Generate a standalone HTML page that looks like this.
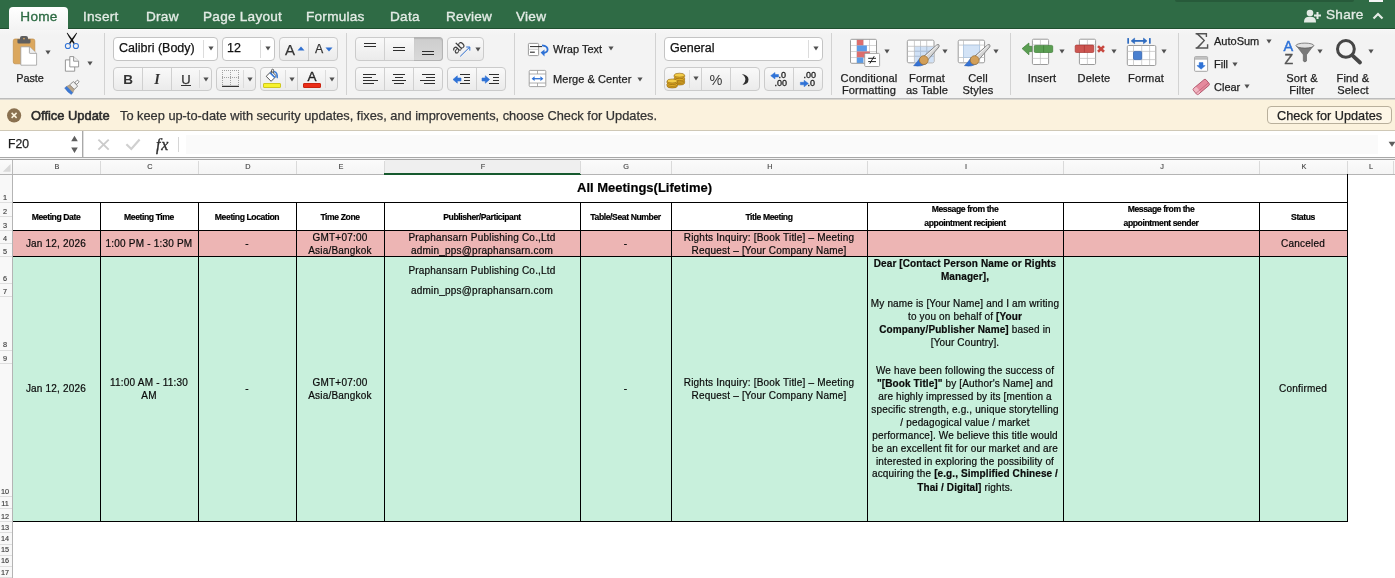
<!DOCTYPE html>
<html><head><meta charset="utf-8"><style>
html,body{margin:0;padding:0;}
body{width:1395px;height:578px;overflow:hidden;position:relative;background:#fff;font-family:'Liberation Sans', sans-serif;}
.t{position:absolute;white-space:pre;will-change:transform;}
b{font-weight:700;letter-spacing:0.1px;}
svg{overflow:visible;}
</style></head><body>
<div style="position:absolute;left:0px;top:0px;width:1395px;height:29px;background:#2f6b45;"></div>
<div style="position:absolute;left:0px;top:28px;width:1395px;height:1px;background:#1f4f2f;"></div>
<div style="position:absolute;left:0px;top:29px;width:1395px;height:1px;background:#fafafa;"></div>
<div style="position:absolute;left:1175px;top:0px;width:179px;height:2px;background:#275a3a;border-radius:0 0 5px 5px;"></div>
<div style="position:absolute;left:1369px;top:0px;width:14px;height:1.5px;background:#f4f4f4;"></div>
<div style="position:absolute;left:9px;top:7px;width:59px;height:23px;background:linear-gradient(#ffffff,#f3f3f3);border-radius:4px 4px 0 0;"></div>
<div class="t" style="left:-1.5px;width:80px;text-align:center;top:8.83px;font-size:13.6px;line-height:16.32px;font-weight:400;color:#2d6b43;letter-spacing:0.25px;-webkit-text-stroke:0.35px #2d6b43;">Home</div>
<div class="t" style="left:83.1px;top:8.83px;font-size:13.6px;line-height:16.32px;font-weight:400;color:#e3ebe5;letter-spacing:0.25px;-webkit-text-stroke:0.35px #e3ebe5;">Insert</div>
<div class="t" style="left:145.5px;top:8.83px;font-size:13.6px;line-height:16.32px;font-weight:400;color:#e3ebe5;letter-spacing:0.25px;-webkit-text-stroke:0.35px #e3ebe5;">Draw</div>
<div class="t" style="left:203.20000000000002px;top:8.83px;font-size:13.6px;line-height:16.32px;font-weight:400;color:#e3ebe5;letter-spacing:0.25px;-webkit-text-stroke:0.35px #e3ebe5;">Page Layout</div>
<div class="t" style="left:306.3px;top:8.83px;font-size:13.6px;line-height:16.32px;font-weight:400;color:#e3ebe5;letter-spacing:0.25px;-webkit-text-stroke:0.35px #e3ebe5;">Formulas</div>
<div class="t" style="left:390.40000000000003px;top:8.83px;font-size:13.6px;line-height:16.32px;font-weight:400;color:#e3ebe5;letter-spacing:0.25px;-webkit-text-stroke:0.35px #e3ebe5;">Data</div>
<div class="t" style="left:445.6px;top:8.83px;font-size:13.6px;line-height:16.32px;font-weight:400;color:#e3ebe5;letter-spacing:0.25px;-webkit-text-stroke:0.35px #e3ebe5;">Review</div>
<div class="t" style="left:516.1999999999999px;top:8.83px;font-size:13.6px;line-height:16.32px;font-weight:400;color:#e3ebe5;letter-spacing:0.25px;-webkit-text-stroke:0.35px #e3ebe5;">View</div>
<svg style="position:absolute;left:1304px;top:9px" width="19" height="14" viewBox="0 0 19 14"><circle cx="6" cy="4" r="3.3" fill="#e3ebe5"/><path d="M0 13.5 C0 8.5 2.5 7.8 6 7.8 C9.5 7.8 12 8.5 12 13.5 Z" fill="#e3ebe5"/><path d="M13.5 3 V10 M10 6.5 H17" stroke="#e3ebe5" stroke-width="2"/></svg>
<div class="t" style="left:1326.3px;top:6.83px;font-size:13.6px;line-height:16.32px;font-weight:400;color:#e3ebe5;letter-spacing:0.25px;-webkit-text-stroke:0.35px #e3ebe5;">Share</div>
<svg style="position:absolute;left:1372px;top:12px" width="12" height="8" viewBox="0 0 12 8"><path d="M1.5 6.5 L6 2 L10.5 6.5" stroke="#e3ebe5" stroke-width="2.2" fill="none"/></svg>
<div style="position:absolute;left:0px;top:30px;width:1395px;height:68px;background:linear-gradient(#f6f6f6 0px,#f3f3f3 6px,#f3f3f3);"></div>
<div style="position:absolute;left:0px;top:98px;width:1395px;height:1px;background:#bcbcbc;"></div>
<div style="position:absolute;left:0px;top:99px;width:1395px;height:1px;background:#d9d6cf;"></div>
<div style="position:absolute;left:104px;top:33px;width:1px;height:62px;background:#d2d2d2;"></div>
<div style="position:absolute;left:346px;top:33px;width:1px;height:62px;background:#d2d2d2;"></div>
<div style="position:absolute;left:514px;top:33px;width:1px;height:62px;background:#d2d2d2;"></div>
<div style="position:absolute;left:655px;top:33px;width:1px;height:62px;background:#d2d2d2;"></div>
<div style="position:absolute;left:831px;top:33px;width:1px;height:62px;background:#d2d2d2;"></div>
<div style="position:absolute;left:1010px;top:33px;width:1px;height:62px;background:#d2d2d2;"></div>
<div style="position:absolute;left:1178px;top:33px;width:1px;height:62px;background:#d2d2d2;"></div>
<svg style="position:absolute;left:10px;top:32px" width="32" height="36" viewBox="0 0 32 36">
<rect x="3.3" y="7" width="21.5" height="24.8" rx="1.8" fill="#dba75d" stroke="#c08e47" stroke-width="0.7"/>
<path d="M7.4 7.2 H20.5 V10 Q20.5 11.6 19 11.6 H8.9 Q7.4 11.6 7.4 10 Z" fill="#5f5f5f"/>
<path d="M10 8 V6 Q10 4 12 4 H16 Q18 4 18 6 V8 Z" fill="#5f5f5f"/>
<circle cx="14" cy="6.6" r="0.9" fill="#dba75d"/>
<path d="M10.8 14.8 H19.4 L26.6 21.4 V33 Q26.6 33.2 26.4 33.2 H11 Q10.8 33.2 10.8 33 Z" fill="#fff" stroke="#9d9d9d" stroke-width="0.8"/>
<path d="M19.4 14.8 V20.8 Q19.4 21.4 20 21.4 H26.6" fill="#eeeeee" stroke="#9d9d9d" stroke-width="0.8"/>
</svg>
<svg style="position:absolute;left:45px;top:49.5px" width="6" height="5" viewBox="0 0 6 5"><path d="M0.4 0.6 H5.6 L3 4.4 Z" fill="#505050"/></svg>
<div class="t" style="left:-0.3999999999999986px;width:60px;text-align:center;top:71.98px;font-size:10.8px;line-height:12.96px;font-weight:400;color:#1e1e1e;letter-spacing:0px;-webkit-text-stroke:0.25px currentColor;">Paste</div>
<svg style="position:absolute;left:60px;top:30px" width="24" height="22" viewBox="0 0 24 22">
<path d="M6.7 3.1 Q7.1 2.6 7.6 3 L12.9 9.9 L14.8 13.3 L13.6 13.9 L11.6 10.9 Q8.6 7.2 6.7 3.1Z" fill="#111"/>
<path d="M17.1 3.1 Q16.7 2.6 16.2 3 L10.9 9.9 L9 13.3 L10.2 13.9 L12.2 10.9 Q15.2 7.2 17.1 3.1Z" fill="#111"/>
<circle cx="7.9" cy="16" r="2.55" fill="none" stroke="#2f72d6" stroke-width="1.05"/>
<circle cx="15.9" cy="16" r="2.55" fill="none" stroke="#2f72d6" stroke-width="1.05"/>
</svg>
<svg style="position:absolute;left:60px;top:54px" width="24" height="20" viewBox="0 0 24 20">
<path d="M5.4 5.9 H10.8 L14.7 9.4 V17.2 H5.4 Z" fill="#fff" stroke="#8c8c8c" stroke-width="0.9"/>
<path d="M9.8 2.6 H13.6 L18.6 7.2 V12.9 H9.8 Z" fill="#fff" stroke="#8c8c8c" stroke-width="0.9"/>
<path d="M13.6 2.6 V7.2 H18.6" fill="#f0f0f0" stroke="#8c8c8c" stroke-width="0.9"/>
</svg>
<svg style="position:absolute;left:86.6px;top:61.4px" width="6" height="5" viewBox="0 0 6 5"><path d="M0.4 0.6 H5.6 L3 4.4 Z" fill="#505050"/></svg>
<svg style="position:absolute;left:60px;top:76px" width="24" height="24" viewBox="0 0 24 24">
<g transform="translate(13.2 10) rotate(45)">
<rect x="-1.3" y="-7.4" width="2.6" height="4.4" rx="1.2" fill="#fafafa" stroke="#5e5e5e" stroke-width="0.7"/>
<rect x="-3.2" y="-3.2" width="6.4" height="5" rx="0.6" fill="#f0f0f0" stroke="#5e5e5e" stroke-width="0.7"/>
<path d="M-3.2 1.8 H3.2 L4.4 5 H-4.4 Z" fill="#b9a68c" stroke="#85735c" stroke-width="0.4"/>
<path d="M-4.4 5 H4.4 L4.7 7.4 Q0 8.4 -4.7 7.4 Z" fill="#3b78d4" stroke="#2c62b8" stroke-width="0.4"/>
</g></svg>
<div style="position:absolute;left:113px;top:37px;width:105px;height:24px;background:#fff;border:1px solid #c4c4c4;border-radius:4px;box-sizing:border-box;"></div>
<div style="position:absolute;left:203px;top:40px;width:1px;height:18px;background:#dcdcdc;"></div>
<svg style="position:absolute;left:207.5px;top:46.0px" width="6" height="5" viewBox="0 0 6 5"><path d="M0.4 0.6 H5.6 L3 4.4 Z" fill="#505050"/></svg>
<div class="t" style="left:118.5px;top:41.07px;font-size:12.5px;line-height:15.0px;font-weight:400;color:#111;letter-spacing:0px;-webkit-text-stroke:0.25px currentColor;">Calibri (Body)</div>
<div style="position:absolute;left:222px;top:37px;width:53px;height:24px;background:#fff;border:1px solid #c4c4c4;border-radius:4px;box-sizing:border-box;"></div>
<div style="position:absolute;left:260px;top:40px;width:1px;height:18px;background:#dcdcdc;"></div>
<svg style="position:absolute;left:264.5px;top:46.0px" width="6" height="5" viewBox="0 0 6 5"><path d="M0.4 0.6 H5.6 L3 4.4 Z" fill="#505050"/></svg>
<div class="t" style="left:227px;top:41.07px;font-size:12.5px;line-height:15.0px;font-weight:400;color:#111;letter-spacing:0px;-webkit-text-stroke:0.25px currentColor;">12</div>
<div style="position:absolute;left:279px;top:37px;width:59px;height:24px;background:linear-gradient(#f9f9f9,#ebebeb);border:1px solid #cbcbcb;border-radius:4px;box-sizing:border-box;"></div>
<div style="position:absolute;left:308px;top:38px;width:1px;height:22px;background:#d0d0d0;"></div>
<div class="t" style="left:280.0px;width:20px;text-align:center;top:40.50px;font-size:15px;line-height:18.0px;font-weight:400;color:#333;letter-spacing:0px;-webkit-text-stroke:0.25px currentColor;">A</div>
<svg style="position:absolute;left:296.5px;top:45.5px" width="8" height="5" viewBox="0 0 8 5"><path d="M0.5 4.5 L4 0.5 L7.5 4.5Z" fill="#2f6fd0"/></svg>
<div class="t" style="left:309.3px;width:20px;text-align:center;top:42.06px;font-size:12.3px;line-height:14.76px;font-weight:400;color:#333;letter-spacing:0px;-webkit-text-stroke:0.25px currentColor;">A</div>
<svg style="position:absolute;left:324.5px;top:46.5px" width="8" height="5" viewBox="0 0 8 5"><path d="M0.5 0.5 L7.5 0.5 L4 4.5Z" fill="#2f6fd0"/></svg>
<div style="position:absolute;left:113px;top:67px;width:99px;height:24px;background:linear-gradient(#f9f9f9,#ebebeb);border:1px solid #cbcbcb;border-radius:4px;box-sizing:border-box;"></div>
<div style="position:absolute;left:142px;top:68px;width:1px;height:22px;background:#d0d0d0;"></div>
<div style="position:absolute;left:171px;top:68px;width:1px;height:22px;background:#d0d0d0;"></div>
<div style="position:absolute;left:199px;top:70px;width:1px;height:18px;background:#dcdcdc;"></div>
<div class="t" style="left:118.19999999999999px;width:20px;text-align:center;top:71.92px;font-size:13.5px;line-height:16.2px;font-weight:700;color:#333;letter-spacing:0px;">B</div>
<div class="t" style="left:147.2px;width:20px;text-align:center;top:70.98px;font-size:14.5px;line-height:17.4px;font-weight:700;color:#333;letter-spacing:0px;font-style:italic;font-family:Liberation Serif;">I</div>
<div class="t" style="left:175.8px;width:20px;text-align:center;top:72.40px;font-size:13px;line-height:15.6px;font-weight:400;color:#333;letter-spacing:0px;-webkit-text-stroke:0.25px currentColor;">U</div>
<div style="position:absolute;left:181px;top:85px;width:10px;height:1.2px;background:#333;"></div>
<svg style="position:absolute;left:202.5px;top:76.5px" width="6" height="5" viewBox="0 0 6 5"><path d="M0.4 0.6 H5.6 L3 4.4 Z" fill="#505050"/></svg>
<div style="position:absolute;left:216px;top:67px;width:40px;height:24px;background:linear-gradient(#f9f9f9,#ebebeb);border:1px solid #cbcbcb;border-radius:4px;box-sizing:border-box;"></div>
<div style="position:absolute;left:243px;top:70px;width:1px;height:18px;background:#dcdcdc;"></div>
<svg style="position:absolute;left:221px;top:69px" width="20" height="19" viewBox="0 0 20 19"><path d="M3 1 h0.9 v0.9 h-0.9z M5 1 h0.9 v0.9 h-0.9z M17 3 h0.9 v0.9 h-0.9z M17 9 h0.9 v0.9 h-0.9z M9 5 h0.9 v0.9 h-0.9z M9 8 h0.9 v0.9 h-0.9z M17 15 h0.9 v0.9 h-0.9z M9 11 h0.9 v0.9 h-0.9z M11 8 h0.9 v0.9 h-0.9z M1 3 h0.9 v0.9 h-0.9z M1 9 h0.9 v0.9 h-0.9z M13 8 h0.9 v0.9 h-0.9z M7 1 h0.9 v0.9 h-0.9z M15 8 h0.9 v0.9 h-0.9z M1 15 h0.9 v0.9 h-0.9z M17 5 h0.9 v0.9 h-0.9z M17 11 h0.9 v0.9 h-0.9z M9 1 h0.9 v0.9 h-0.9z M17 8 h0.9 v0.9 h-0.9z M9 7 h0.9 v0.9 h-0.9z M11 1 h0.9 v0.9 h-0.9z M9 13 h0.9 v0.9 h-0.9z M13 1 h0.9 v0.9 h-0.9z M1 5 h0.9 v0.9 h-0.9z M1 11 h0.9 v0.9 h-0.9z M1 8 h0.9 v0.9 h-0.9z M15 1 h0.9 v0.9 h-0.9z M3 8 h0.9 v0.9 h-0.9z M17 1 h0.9 v0.9 h-0.9z M17 7 h0.9 v0.9 h-0.9z M9 3 h0.9 v0.9 h-0.9z M5 8 h0.9 v0.9 h-0.9z M9 9 h0.9 v0.9 h-0.9z M1 1 h0.9 v0.9 h-0.9z M17 13 h0.9 v0.9 h-0.9z M9 15 h0.9 v0.9 h-0.9z M1 7 h0.9 v0.9 h-0.9z M1 13 h0.9 v0.9 h-0.9z M7 8 h0.9 v0.9 h-0.9z" fill="#9a9a9a"/><rect x="1" y="16.8" width="17" height="1.1" fill="#1e1e1e"/></svg>
<svg style="position:absolute;left:246.5px;top:76.5px" width="6" height="5" viewBox="0 0 6 5"><path d="M0.4 0.6 H5.6 L3 4.4 Z" fill="#505050"/></svg>
<div style="position:absolute;left:260px;top:67px;width:78px;height:24px;background:linear-gradient(#f9f9f9,#ebebeb);border:1px solid #cbcbcb;border-radius:4px;box-sizing:border-box;"></div>
<div style="position:absolute;left:285px;top:70px;width:1px;height:18px;background:#dcdcdc;"></div>
<div style="position:absolute;left:297px;top:68px;width:1px;height:22px;background:#d0d0d0;"></div>
<div style="position:absolute;left:325px;top:70px;width:1px;height:18px;background:#dcdcdc;"></div>
<svg style="position:absolute;left:264px;top:68px" width="16" height="15" viewBox="0 0 16 15">
<path d="M2.2 8.3 L7.5 3.1 L12.4 8 L7.1 13.3 Z" fill="#fff" stroke="#3e3e3e" stroke-width="0.9" stroke-linejoin="round"/>
<path d="M6 4.6 L11 9.6" stroke="#3a7bd5" stroke-width="1.6"/>
<path d="M7.6 5.4 V2.2 Q7.6 1.2 8.6 1.2 Q9.6 1.2 9.6 2.2 V5" stroke="#3e3e3e" stroke-width="0.8" fill="none"/>
<path d="M10.4 3.6 Q13.6 4.6 13.2 9.6" stroke="#3a7bd5" stroke-width="1.5" fill="none" stroke-linecap="round"/></svg>
<div style="position:absolute;left:263px;top:83px;width:18px;height:5px;background:#f7f22e;border:0.6px solid #cfc820;box-sizing:border-box;border-radius:1px;"></div>
<svg style="position:absolute;left:288.5px;top:76.5px" width="6" height="5" viewBox="0 0 6 5"><path d="M0.4 0.6 H5.6 L3 4.4 Z" fill="#505050"/></svg>
<div class="t" style="left:302.0px;width:20px;text-align:center;top:68.62px;font-size:13.5px;line-height:16.2px;font-weight:400;color:#222;letter-spacing:0px;-webkit-text-stroke:0.35px #222;">A</div>
<div style="position:absolute;left:303px;top:83px;width:18px;height:5px;background:#ea2d17;border:0.6px solid #c92410;box-sizing:border-box;border-radius:1px;"></div>
<svg style="position:absolute;left:328.5px;top:76.5px" width="6" height="5" viewBox="0 0 6 5"><path d="M0.4 0.6 H5.6 L3 4.4 Z" fill="#505050"/></svg>
<div style="position:absolute;left:355px;top:37px;width:88px;height:24px;background:linear-gradient(#f9f9f9,#ebebeb);border:1px solid #cbcbcb;border-radius:4px;box-sizing:border-box;"></div>
<div style="position:absolute;left:414px;top:37px;width:29px;height:24px;background:linear-gradient(#cdcdcd,#d9d9d9);border:1px solid #b4b4b4;border-left:none;border-radius:0 4px 4px 0;box-sizing:border-box;box-shadow:inset 0 1px 1px rgba(0,0,0,0.12);"></div>
<div style="position:absolute;left:384px;top:38px;width:1px;height:22px;background:#d0d0d0;"></div>
<div style="position:absolute;left:364px;top:43px;width:12px;height:1px;background:#2e2e2e;"></div>
<div style="position:absolute;left:364px;top:46px;width:12px;height:1px;background:#2e2e2e;"></div>
<div style="position:absolute;left:393px;top:47px;width:12px;height:1px;background:#2e2e2e;"></div>
<div style="position:absolute;left:393px;top:50px;width:12px;height:1px;background:#2e2e2e;"></div>
<div style="position:absolute;left:422px;top:51px;width:12px;height:1px;background:#2e2e2e;"></div>
<div style="position:absolute;left:422px;top:54px;width:12px;height:1px;background:#2e2e2e;"></div>
<div style="position:absolute;left:355px;top:67px;width:88px;height:24px;background:linear-gradient(#f9f9f9,#ebebeb);border:1px solid #cbcbcb;border-radius:4px;box-sizing:border-box;"></div>
<div style="position:absolute;left:384px;top:68px;width:1px;height:22px;background:#d0d0d0;"></div>
<div style="position:absolute;left:413px;top:68px;width:1px;height:22px;background:#d0d0d0;"></div>
<div style="position:absolute;left:363px;top:74px;width:13px;height:1px;background:#2e2e2e;"></div>
<div style="position:absolute;left:363px;top:77px;width:9px;height:1px;background:#2e2e2e;"></div>
<div style="position:absolute;left:363px;top:80px;width:15px;height:1px;background:#2e2e2e;"></div>
<div style="position:absolute;left:363px;top:83px;width:11px;height:1px;background:#2e2e2e;"></div>
<div style="position:absolute;left:393px;top:74px;width:12px;height:1px;background:#2e2e2e;"></div>
<div style="position:absolute;left:395px;top:77px;width:8px;height:1px;background:#2e2e2e;"></div>
<div style="position:absolute;left:392px;top:80px;width:14px;height:1px;background:#2e2e2e;"></div>
<div style="position:absolute;left:394px;top:83px;width:10px;height:1px;background:#2e2e2e;"></div>
<div style="position:absolute;left:422px;top:74px;width:13px;height:1px;background:#2e2e2e;"></div>
<div style="position:absolute;left:426px;top:77px;width:9px;height:1px;background:#2e2e2e;"></div>
<div style="position:absolute;left:420px;top:80px;width:15px;height:1px;background:#2e2e2e;"></div>
<div style="position:absolute;left:424px;top:83px;width:11px;height:1px;background:#2e2e2e;"></div>
<div style="position:absolute;left:447px;top:37px;width:37px;height:24px;background:linear-gradient(#f9f9f9,#ebebeb);border:1px solid #cbcbcb;border-radius:4px;box-sizing:border-box;"></div>
<svg style="position:absolute;left:450px;top:39px" width="24" height="20" viewBox="0 0 24 20"><text transform="translate(6.2 15.6) rotate(-45)" font-family="Liberation Sans" font-size="12" fill="#333" stroke="#333" stroke-width="0.15">ab</text>
<path d="M10.2 17.4 L19.4 8.4" stroke="#2f6fd0" stroke-width="1"/><path d="M16.2 8 H19.8 V11.6" stroke="#2f6fd0" stroke-width="1" fill="none"/></svg>
<svg style="position:absolute;left:474.5px;top:46.5px" width="6" height="5" viewBox="0 0 6 5"><path d="M0.4 0.6 H5.6 L3 4.4 Z" fill="#505050"/></svg>
<div style="position:absolute;left:447px;top:67px;width:59px;height:24px;background:linear-gradient(#f9f9f9,#ebebeb);border:1px solid #cbcbcb;border-radius:4px;box-sizing:border-box;"></div>
<div style="position:absolute;left:476px;top:68px;width:1px;height:22px;background:#d0d0d0;"></div>
<svg style="position:absolute;left:452px;top:72px" width="20" height="14" viewBox="0 0 20 14"><path d="M1 7.5 L5.3 3.8 V6 H9 V9 H5.3 V11.2Z" fill="#2f72d6" stroke="#2f72d6" stroke-width="0.6" stroke-linejoin="round"/>
<g fill="#2e2e2e"><rect x="8" y="2" width="10" height="1"/><rect x="12" y="5" width="6" height="1"/><rect x="12" y="8" width="6" height="1"/><rect x="8" y="11" width="10" height="1"/></g></svg>
<svg style="position:absolute;left:481px;top:72px" width="20" height="14" viewBox="0 0 20 14"><path d="M8.6 7.5 L4.3 3.8 V6 H1 V9 H4.3 V11.2Z" fill="#2f72d6" stroke="#2f72d6" stroke-width="0.6" stroke-linejoin="round"/>
<g fill="#2e2e2e"><rect x="8" y="2" width="10" height="1"/><rect x="12" y="5" width="6" height="1"/><rect x="12" y="8" width="6" height="1"/><rect x="8" y="11" width="10" height="1"/></g></svg>
<svg style="position:absolute;left:524px;top:38px" width="28" height="52" viewBox="0 0 28 52">
<rect x="4.4" y="5.4" width="10.2" height="12.2" rx="1" fill="#fff" stroke="#8f8f8f" stroke-width="0.9"/>
<path d="M4.4 11.3 H14.6" stroke="#b8b8b8" stroke-width="0.7"/>
<path d="M6 8.6 H18" stroke="#2a2a2a" stroke-width="1"/><path d="M6 14.2 H10.8" stroke="#2a2a2a" stroke-width="1.1"/>
<path d="M18 7.4 Q23.8 8 23.6 11.8 Q23.4 14.6 19.6 15" stroke="#2f72d6" stroke-width="1.8" fill="none"/>
<path d="M16.6 14.6 L20.5 11.4 L20.5 18.4 Z" fill="#2f72d6"/>
<rect x="5.2" y="32.4" width="16.6" height="16.2" rx="1" fill="#fff" stroke="#9a9a9a" stroke-width="0.9"/>
<path d="M5.2 36 H21.8 M5.2 45 H21.8 M13.5 32.4 V36 M13.5 45 V48.6" stroke="#9a9a9a" stroke-width="0.8"/>
<path d="M9.4 40.7 H16.6" stroke="#2f72d6" stroke-width="1.3"/>
<path d="M7.6 40.7 L10.6 38.3 V43.1Z M19.4 40.7 L16.4 38.3 V43.1Z" fill="#2f72d6"/>
</svg>
<div class="t" style="left:552.5px;top:43.29px;font-size:11px;line-height:13.2px;font-weight:400;color:#1e1e1e;letter-spacing:0px;-webkit-text-stroke:0.25px currentColor;">Wrap Text</div>
<svg style="position:absolute;left:608px;top:46.0px" width="6" height="5" viewBox="0 0 6 5"><path d="M0.4 0.6 H5.6 L3 4.4 Z" fill="#505050"/></svg>
<div class="t" style="left:552.5px;top:73.29px;font-size:11px;line-height:13.2px;font-weight:400;color:#1e1e1e;letter-spacing:0.05px;-webkit-text-stroke:0.25px currentColor;">Merge &amp; Center</div>
<svg style="position:absolute;left:637px;top:76.5px" width="6" height="5" viewBox="0 0 6 5"><path d="M0.4 0.6 H5.6 L3 4.4 Z" fill="#505050"/></svg>
<div style="position:absolute;left:664px;top:37px;width:159px;height:24px;background:#fff;border:1px solid #c4c4c4;border-radius:4px;box-sizing:border-box;"></div>
<div style="position:absolute;left:808px;top:40px;width:1px;height:18px;background:#dcdcdc;"></div>
<svg style="position:absolute;left:812.5px;top:46.0px" width="6" height="5" viewBox="0 0 6 5"><path d="M0.4 0.6 H5.6 L3 4.4 Z" fill="#505050"/></svg>
<div class="t" style="left:669.5px;top:40.87px;font-size:12.5px;line-height:15.0px;font-weight:400;color:#111;letter-spacing:0px;-webkit-text-stroke:0.25px currentColor;">General</div>
<div style="position:absolute;left:664px;top:67px;width:96px;height:24px;background:linear-gradient(#f9f9f9,#ebebeb);border:1px solid #cbcbcb;border-radius:4px;box-sizing:border-box;"></div>
<div style="position:absolute;left:689px;top:70px;width:1px;height:18px;background:#dcdcdc;"></div>
<div style="position:absolute;left:701px;top:68px;width:1px;height:22px;background:#d0d0d0;"></div>
<div style="position:absolute;left:730px;top:68px;width:1px;height:22px;background:#d0d0d0;"></div>
<svg style="position:absolute;left:665px;top:70px" width="22" height="18" viewBox="0 0 22 18"><g stroke="#8a6210" stroke-width="0.6">
<path d="M9.2 11.5 v1.6 a5.2 2 0 0 0 10.4 0 v-1.6" fill="#d9a21e"/><ellipse cx="14.4" cy="11.5" rx="5.2" ry="2" fill="#e9b52a"/>
<path d="M9.2 8.6 v1.6 a5.2 2 0 0 0 10.4 0 v-1.6" fill="#d9a21e"/><ellipse cx="14.4" cy="8.6" rx="5.2" ry="2" fill="#e9b52a"/>
<path d="M9.2 5.2 v1.6 a5.2 2 0 0 0 10.4 0 v-1.6" fill="#d9a21e"/><ellipse cx="14.4" cy="5.2" rx="5.2" ry="2" fill="#f3cc48"/>
<path d="M2 14.4 v1.6 a5.2 2 0 0 0 10.4 0 v-1.6" fill="#d9a21e"/><ellipse cx="7.2" cy="14.4" rx="5.2" ry="2" fill="#e9b52a"/>
<path d="M2 11 v1.6 a5.2 2 0 0 0 10.4 0 v-1.6" fill="#d9a21e"/><ellipse cx="7.2" cy="11" rx="5.2" ry="2" fill="#f3cc48"/>
</g></svg>
<svg style="position:absolute;left:692.5px;top:76.2px" width="6" height="5" viewBox="0 0 6 5"><path d="M0.4 0.6 H5.6 L3 4.4 Z" fill="#505050"/></svg>
<div class="t" style="left:701.0px;width:30px;text-align:center;top:71.98px;font-size:14.5px;line-height:17.4px;font-weight:400;color:#3a3a3a;letter-spacing:0px;">%</div>
<svg style="position:absolute;left:739px;top:72px" width="12" height="14" viewBox="0 0 12 14"><path d="M2.8 2 Q9.5 3 9.5 7.5 Q9.5 12 3.5 13 Q6.4 10.5 6.4 7.5 Q6.4 4.4 2.8 2Z" fill="#2e2e2e"/></svg>
<div style="position:absolute;left:764px;top:67px;width:59px;height:24px;background:linear-gradient(#f9f9f9,#ebebeb);border:1px solid #cbcbcb;border-radius:4px;box-sizing:border-box;"></div>
<div style="position:absolute;left:793px;top:68px;width:1px;height:22px;background:#d0d0d0;"></div>
<svg style="position:absolute;left:768px;top:70px" width="24" height="18" viewBox="0 0 24 18"><path d="M2.7 5.7 L7 2.5 V4.5 H10.5 V7 H7 V9Z" fill="#2f72d6" stroke="#2f72d6" stroke-width="0.5" stroke-linejoin="round"/>
<text x="10.5" y="8" font-family="Liberation Sans" font-size="9" fill="#222" stroke="#222" stroke-width="0.3">.0</text>
<text x="6.6" y="15.8" font-family="Liberation Sans" font-size="9" fill="#222" stroke="#222" stroke-width="0.3">.00</text></svg>
<svg style="position:absolute;left:797px;top:70px" width="24" height="18" viewBox="0 0 24 18"><text x="6.6" y="8" font-family="Liberation Sans" font-size="9" fill="#222" stroke="#222" stroke-width="0.3">.00</text>
<path d="M11.4 13.5 L7.1 10.3 V12.3 H3.4 V14.8 H7.1 V16.8Z" fill="#2f72d6" stroke="#2f72d6" stroke-width="0.5" stroke-linejoin="round"/>
<text x="10.5" y="15.8" font-family="Liberation Sans" font-size="9" fill="#222" stroke="#222" stroke-width="0.3">.0</text></svg>
<svg style="position:absolute;left:846px;top:36px" width="36" height="34" viewBox="0 0 36 34">
<rect x="4.5" y="3.3" width="26" height="24" rx="1.2" fill="#fff"/>
<path d="M4.5 9.5 H30.5 M4.5 15.5 H30.5 M4.5 21.5 H30.5 M10.9 3.3 V27.3 M17.1 3.3 V27.3 M23.5 3.3 V27.3" stroke="#c4c4c4" stroke-width="0.7"/>
<rect x="10.9" y="3.7" width="6.4" height="5.8" fill="#dc6e6e"/>
<rect x="10.9" y="9.5" width="10" height="6" fill="#5b9be6"/>
<rect x="10.9" y="15.5" width="13" height="6" fill="#dc6e6e"/>
<rect x="10.9" y="21.5" width="6.4" height="5.6" fill="#5b9be6"/>
<rect x="4.5" y="3.3" width="26" height="24" rx="1.2" fill="none" stroke="#9a9a9a" stroke-width="1"/>
<rect x="18.7" y="17.4" width="14.9" height="13.1" rx="1" fill="#fff" stroke="#9a9a9a" stroke-width="0.9"/>
<path d="M22.2 22.3 H30 M22.2 25.6 H30 M28.2 20.2 L23.8 27.6" stroke="#222" stroke-width="1"/>
</svg>
<svg style="position:absolute;left:883.5px;top:49.3px" width="6" height="5" viewBox="0 0 6 5"><path d="M0.4 0.6 H5.6 L3 4.4 Z" fill="#505050"/></svg>
<div class="t" style="left:829.2px;width:80px;text-align:center;top:72.19px;font-size:11.1px;line-height:13.32px;font-weight:400;color:#1e1e1e;letter-spacing:0.12px;-webkit-text-stroke:0.25px currentColor;">Conditional</div>
<div class="t" style="left:829.2px;width:80px;text-align:center;top:84.39px;font-size:11.1px;line-height:13.32px;font-weight:400;color:#1e1e1e;letter-spacing:0.12px;-webkit-text-stroke:0.25px currentColor;">Formatting</div>
<div class="t" style="left:886.5px;width:80px;text-align:center;top:72.19px;font-size:11.1px;line-height:13.32px;font-weight:400;color:#1e1e1e;letter-spacing:0.12px;-webkit-text-stroke:0.25px currentColor;">Format</div>
<div class="t" style="left:886.5px;width:80px;text-align:center;top:84.39px;font-size:11.1px;line-height:13.32px;font-weight:400;color:#1e1e1e;letter-spacing:0.12px;-webkit-text-stroke:0.25px currentColor;">as Table</div>
<div class="t" style="left:938.0px;width:80px;text-align:center;top:72.19px;font-size:11.1px;line-height:13.32px;font-weight:400;color:#1e1e1e;letter-spacing:0.12px;-webkit-text-stroke:0.25px currentColor;">Cell</div>
<div class="t" style="left:938.0px;width:80px;text-align:center;top:84.39px;font-size:11.1px;line-height:13.32px;font-weight:400;color:#1e1e1e;letter-spacing:0.12px;-webkit-text-stroke:0.25px currentColor;">Styles</div>
<svg style="position:absolute;left:902px;top:36px" width="50" height="34" viewBox="0 0 50 34">
<rect x="5.3" y="4.1" width="26.7" height="22.7" rx="1.5" fill="#fff" stroke="#9a9a9a" stroke-width="1"/>
<rect x="12.4" y="10.3" width="19.2" height="16.1" fill="#cfe0f5"/>
<path d="M5.3 10.3 H32 M5.3 15.3 H32 M5.3 20.3 H32 M12.4 4.1 V26.8 M18.5 4.1 V26.8 M24.7 4.1 V26.8" stroke="#b9b9b9" stroke-width="0.7"/>
<path d="M12.4 15.3 H32 M12.4 20.3 H32 M18.5 10.3 V26.8 M24.7 10.3 V26.8" stroke="#a9c3e3" stroke-width="0.7"/>
<g transform="translate(21.8 24.1)">
<path d="M-3.4 -2.6 Q-6.5 2 -10.2 5.6 Q-3.5 7.2 2.8 3.6 Z" fill="#3572d4" stroke="#2a5fb0" stroke-width="0.5"/>
<path d="M0.2 -4 L13 -15.2 Q15.9 -16.6 15.2 -13.2 L4 -0.2 Z" fill="#d6d6d6" stroke="#6e6e6e" stroke-width="0.8"/>
<path d="M1.4 -3.4 L13.4 -14.4" stroke="#f4f4f4" stroke-width="1"/>
<circle cx="0" cy="0" r="4.4" fill="#d3a05a" stroke="#9c7030" stroke-width="0.7"/>
</g></svg>
<svg style="position:absolute;left:941.5px;top:49.4px" width="6" height="5" viewBox="0 0 6 5"><path d="M0.4 0.6 H5.6 L3 4.4 Z" fill="#505050"/></svg>
<svg style="position:absolute;left:952px;top:36px" width="50" height="34" viewBox="0 0 50 34">
<rect x="6.2" y="4.1" width="26.4" height="22.7" rx="1.5" fill="#fff" stroke="#9a9a9a" stroke-width="1"/>
<path d="M6.2 9.1 H32.6 M6.2 21.5 H32.6 M11.5 4.1 V26.8 M27.6 4.1 V26.8" stroke="#b9b9b9" stroke-width="0.7"/>
<rect x="11.5" y="9.1" width="16.1" height="12.4" fill="#d3e3f6" stroke="#a9c3e3" stroke-width="0.7"/>
<g transform="translate(22.6 24.1)">
<path d="M-3.4 -2.6 Q-6.5 2 -10.2 5.6 Q-3.5 7.2 2.8 3.6 Z" fill="#3572d4" stroke="#2a5fb0" stroke-width="0.5"/>
<path d="M0.2 -4 L13 -15.2 Q15.9 -16.6 15.2 -13.2 L4 -0.2 Z" fill="#d6d6d6" stroke="#6e6e6e" stroke-width="0.8"/>
<path d="M1.4 -3.4 L13.4 -14.4" stroke="#f4f4f4" stroke-width="1"/>
<circle cx="0" cy="0" r="4.4" fill="#d3a05a" stroke="#9c7030" stroke-width="0.7"/>
</g></svg>
<svg style="position:absolute;left:992.5px;top:49.4px" width="6" height="5" viewBox="0 0 6 5"><path d="M0.4 0.6 H5.6 L3 4.4 Z" fill="#505050"/></svg>
<svg style="position:absolute;left:1018px;top:36px" width="50" height="34" viewBox="0 0 50 34">
<rect x="14.4" y="3.2" width="16.2" height="25.3" rx="1.2" fill="#fff" stroke="#9a9a9a" stroke-width="1"/>
<path d="M22.4 3.2 V28.5 M14.4 22.4 H30.6 M14.4 8.8 H30.6" stroke="#bdbdbd" stroke-width="0.7"/>
<rect x="16.2" y="9.4" width="18.5" height="7.1" rx="1.2" fill="#5a9e52" stroke="#3d7d37" stroke-width="0.7"/>
<path d="M25.6 9.4 V16.5" stroke="#3d7d37" stroke-width="0.7"/>
<path d="M4.1 12.6 L10.9 7 V10.3 H13.8 V15.6 H10.9 V18.8 Z" fill="#5a9e52" stroke="#3d7d37" stroke-width="0.7" stroke-linejoin="round"/>
</svg>
<svg style="position:absolute;left:1058.5px;top:49.4px" width="6" height="5" viewBox="0 0 6 5"><path d="M0.4 0.6 H5.6 L3 4.4 Z" fill="#505050"/></svg>
<div class="t" style="left:1002.0px;width:80px;text-align:center;top:71.79px;font-size:11.1px;line-height:13.32px;font-weight:400;color:#1e1e1e;letter-spacing:0.12px;-webkit-text-stroke:0.25px currentColor;">Insert</div>
<svg style="position:absolute;left:1070px;top:36px" width="50" height="34" viewBox="0 0 50 34">
<rect x="9.4" y="3.2" width="16.2" height="25.3" rx="1.2" fill="#fff" stroke="#9a9a9a" stroke-width="1"/>
<path d="M17.4 3.2 V28.5 M9.4 22.4 H25.6 M9.4 8.8 H25.6" stroke="#bdbdbd" stroke-width="0.7"/>
<rect x="5.2" y="9.1" width="18.6" height="7.4" rx="1.2" fill="#cc5550" stroke="#a83a35" stroke-width="0.7"/>
<path d="M14.4 9.1 V16.5" stroke="#a83a35" stroke-width="0.7"/>
<path d="M28 10.1 L34 15.8 M34 10.1 L28 15.8" stroke="#c84840" stroke-width="2.6"/>
</svg>
<svg style="position:absolute;left:1110.5px;top:49.4px" width="6" height="5" viewBox="0 0 6 5"><path d="M0.4 0.6 H5.6 L3 4.4 Z" fill="#505050"/></svg>
<div class="t" style="left:1054.2px;width:80px;text-align:center;top:71.79px;font-size:11.1px;line-height:13.32px;font-weight:400;color:#1e1e1e;letter-spacing:0.12px;-webkit-text-stroke:0.25px currentColor;">Delete</div>
<svg style="position:absolute;left:1122px;top:34px" width="50" height="34" viewBox="0 0 50 34">
<rect x="5.3" y="4.1" width="1.7" height="5.6" fill="#2f6cc0"/><rect x="27" y="4.1" width="1.7" height="5.6" fill="#2f6cc0"/>
<path d="M11.5 6.9 H22.6" stroke="#2f6cc0" stroke-width="1.8"/>
<path d="M9.1 6.9 L12.6 4.1 V9.7 Z M25 6.9 L21.5 4.1 V9.7 Z" fill="#2f6cc0" stroke="#2f6cc0" stroke-width="0.6" stroke-linejoin="round"/>
<rect x="5.3" y="11.5" width="28.5" height="20" rx="1.3" fill="#fff" stroke="#9a9a9a" stroke-width="1"/>
<path d="M5.3 17.4 H33.8 M5.3 25.6 H33.8 M11.5 11.5 V31.5 M19.7 11.5 V31.5 M27.6 11.5 V31.5" stroke="#bdbdbd" stroke-width="0.7"/>
<rect x="11.5" y="17.4" width="8.2" height="8.2" rx="1.2" fill="#4a80d0" stroke="#2f62b0" stroke-width="0.7"/>
</svg>
<svg style="position:absolute;left:1160.5px;top:49.1px" width="6" height="5" viewBox="0 0 6 5"><path d="M0.4 0.6 H5.6 L3 4.4 Z" fill="#505050"/></svg>
<div class="t" style="left:1105.8px;width:80px;text-align:center;top:71.79px;font-size:11.1px;line-height:13.32px;font-weight:400;color:#1e1e1e;letter-spacing:0.12px;-webkit-text-stroke:0.25px currentColor;">Format</div>
<svg style="position:absolute;left:1190px;top:30px" width="22" height="22" viewBox="0 0 22 22"><path d="M5.6 3.8 H16.4 V7 M5.6 18 H17.6 V14.2" stroke="#555" stroke-width="1.4" fill="none"/><path d="M5.8 3.4 L13.4 10.6 L5.8 18.3 L8.2 18.3 L15.2 10.6 L8.4 3.4Z" fill="#555"/></svg>
<div class="t" style="left:1214px;top:34.89px;font-size:11px;line-height:13.2px;font-weight:400;color:#1e1e1e;letter-spacing:0px;-webkit-text-stroke:0.25px currentColor;">AutoSum</div>
<svg style="position:absolute;left:1265.5px;top:38.5px" width="6" height="5" viewBox="0 0 6 5"><path d="M0.4 0.6 H5.6 L3 4.4 Z" fill="#505050"/></svg>
<svg style="position:absolute;left:1190px;top:54px" width="22" height="22" viewBox="0 0 22 22"><rect x="4.6" y="2.7" width="13" height="14.6" rx="0.8" fill="#fff" stroke="#9a9a9a" stroke-width="0.9"/>
<rect x="5" y="3.1" width="12.2" height="2.6" fill="#bdbdbd"/>
<path d="M9.2 8.6 H13 V11.6 H15.2 L11.1 15.2 L6.9 11.6 H9.2Z" fill="#2f72d6" stroke="#2f72d6" stroke-width="0.5" stroke-linejoin="round"/></svg>
<div class="t" style="left:1214px;top:58.09px;font-size:11px;line-height:13.2px;font-weight:400;color:#1e1e1e;letter-spacing:0px;-webkit-text-stroke:0.25px currentColor;">Fill</div>
<svg style="position:absolute;left:1231.5px;top:61.5px" width="6" height="5" viewBox="0 0 6 5"><path d="M0.4 0.6 H5.6 L3 4.4 Z" fill="#505050"/></svg>
<svg style="position:absolute;left:1190px;top:76px" width="22" height="22" viewBox="0 0 22 22"><g transform="rotate(-40 11 11)"><rect x="3" y="7.3" width="16.5" height="7.6" rx="1.5" fill="#e58a9d" stroke="#a84c62" stroke-width="0.8"/>
<rect x="3.4" y="7.7" width="4.2" height="6.8" rx="1" fill="#f1b7c3"/><path d="M3 12.6 H19.5" stroke="#b85a70" stroke-width="0.6"/></g></svg>
<div class="t" style="left:1214px;top:80.69px;font-size:11px;line-height:13.2px;font-weight:400;color:#1e1e1e;letter-spacing:0px;-webkit-text-stroke:0.25px currentColor;">Clear</div>
<svg style="position:absolute;left:1243.5px;top:84.0px" width="6" height="5" viewBox="0 0 6 5"><path d="M0.4 0.6 H5.6 L3 4.4 Z" fill="#505050"/></svg>
<svg style="position:absolute;left:1280px;top:36px" width="46" height="32" viewBox="0 0 46 32">
<text x="3.4" y="14.7" font-family="Liberation Sans" font-size="14.5" fill="#2e72d8" stroke="#2e72d8" stroke-width="0.45">A</text>
<text x="4.6" y="27.7" font-family="Liberation Sans" font-size="14" fill="#555" stroke="#555" stroke-width="0.5">Z</text>
<path d="M16.3 9.6 L23.3 18.8 V25 Q24.9 26.8 26.5 25 V18.8 L33.5 9.6 Z" fill="#7a7a7a" stroke="#5a5a5a" stroke-width="0.6"/>
<ellipse cx="24.9" cy="9.6" rx="8.9" ry="2.5" fill="#e2e2e2" stroke="#5a5a5a" stroke-width="0.7"/>
</svg>
<svg style="position:absolute;left:1316.6px;top:49.3px" width="6" height="5" viewBox="0 0 6 5"><path d="M0.4 0.6 H5.6 L3 4.4 Z" fill="#505050"/></svg>
<div class="t" style="left:1261.5px;width:80px;text-align:center;top:72.19px;font-size:11.1px;line-height:13.32px;font-weight:400;color:#1e1e1e;letter-spacing:0.12px;-webkit-text-stroke:0.25px currentColor;">Sort &amp;</div>
<div class="t" style="left:1261.5px;width:80px;text-align:center;top:84.39px;font-size:11.1px;line-height:13.32px;font-weight:400;color:#1e1e1e;letter-spacing:0.12px;-webkit-text-stroke:0.25px currentColor;">Filter</div>
<svg style="position:absolute;left:1330px;top:34px" width="40" height="34" viewBox="0 0 40 34"><circle cx="15.9" cy="14.9" r="8.4" fill="none" stroke="#464646" stroke-width="3"/><path d="M22.6 21.6 L30 28.5" stroke="#464646" stroke-width="3.8" stroke-linecap="round"/></svg>
<svg style="position:absolute;left:1367.5px;top:49.1px" width="6" height="5" viewBox="0 0 6 5"><path d="M0.4 0.6 H5.6 L3 4.4 Z" fill="#505050"/></svg>
<div class="t" style="left:1313.0px;width:80px;text-align:center;top:72.19px;font-size:11.1px;line-height:13.32px;font-weight:400;color:#1e1e1e;letter-spacing:0.12px;-webkit-text-stroke:0.25px currentColor;">Find &amp;</div>
<div class="t" style="left:1313.0px;width:80px;text-align:center;top:84.39px;font-size:11.1px;line-height:13.32px;font-weight:400;color:#1e1e1e;letter-spacing:0.12px;-webkit-text-stroke:0.25px currentColor;">Select</div>
<div style="position:absolute;left:0px;top:99.5px;width:1395px;height:31px;background:#fbf2dd;"></div>
<div style="position:absolute;left:0px;top:130px;width:1395px;height:1px;background:#cfc8b6;"></div>
<svg style="position:absolute;left:7px;top:108px" width="15" height="15" viewBox="0 0 15 15"><circle cx="7.1" cy="7.4" r="7.1" fill="#8a7150"/><path d="M4.6 4.9 L9.6 9.9 M9.6 4.9 L4.6 9.9" stroke="#fbf2dd" stroke-width="1.5"/></svg>
<div class="t" style="left:30.5px;top:108.39px;font-size:12.9px;line-height:15.48px;font-weight:400;color:#2a2a2a;letter-spacing:0px;-webkit-text-stroke:0.55px #2a2a2a;">Office Update</div>
<div class="t" style="left:119.7px;top:108.48px;font-size:12.8px;line-height:15.36px;font-weight:400;color:#333;letter-spacing:0.0px;-webkit-text-stroke:0.25px currentColor;">To keep up-to-date with security updates, fixes, and improvements, choose Check for Updates.</div>
<div style="position:absolute;left:1267.2px;top:106.2px;width:124.7px;height:17.5px;background:#fdf6e6;border:1px solid #b9b09c;border-radius:4px;box-sizing:border-box;"></div>
<div class="t" style="left:1276.8px;top:108.88px;font-size:12.7px;line-height:15.24px;font-weight:400;color:#222;letter-spacing:0px;-webkit-text-stroke:0.25px currentColor;">Check for Updates</div>
<div style="position:absolute;left:0px;top:131px;width:1395px;height:26px;background:#fff;"></div>
<div style="position:absolute;left:82px;top:131px;width:1px;height:26px;background:#a9a9a9;"></div>
<div style="position:absolute;left:83px;top:131px;width:1px;height:26px;background:#dedede;"></div>
<div class="t" style="left:8.2px;top:137.15px;font-size:12.2px;line-height:14.64px;font-weight:400;color:#1e1e1e;letter-spacing:0px;-webkit-text-stroke:0.25px currentColor;">F20</div>
<svg style="position:absolute;left:70px;top:134px" width="9" height="20" viewBox="0 0 9 20"><path d="M1.2 7.3 L4.5 1.7 L7.8 7.3Z M1.2 13.4 L4.5 19 L7.8 13.4Z" fill="#5f5f5f"/></svg>
<svg style="position:absolute;left:96px;top:138px" width="14" height="13" viewBox="0 0 14 13"><path d="M2.4 1.6 L12.7 11.6 M12.7 1.6 L2.4 11.6" stroke="#cbcbcb" stroke-width="1.9"/></svg>
<svg style="position:absolute;left:125px;top:138px" width="16" height="13" viewBox="0 0 16 13"><path d="M1.4 6.2 L6.3 11 L14.6 1.6" stroke="#d0d0d0" stroke-width="2.2" fill="none"/></svg>
<div class="t" style="left:156.3px;top:134.76px;font-size:16px;line-height:19.2px;font-weight:400;color:#2e2e2e;letter-spacing:0px;font-family:Liberation Serif;-webkit-text-stroke:0.35px #2e2e2e;"><span style="font-style:italic">f</span><span style="font-style:italic;margin-left:0.8px">x</span></div>
<div style="position:absolute;left:178px;top:137px;width:1px;height:15px;background:#d6d6d6;"></div>
<div style="position:absolute;left:186px;top:135px;width:1192px;height:19px;background:#fafafa;"></div>
<svg style="position:absolute;left:1388px;top:141px" width="9" height="7" viewBox="0 0 9 7"><path d="M0.6 0.8 H7.4 L4 5.8Z" fill="#5e5e5e"/></svg>
<div style="position:absolute;left:0px;top:157px;width:1395px;height:1px;background:#a8a8a8;"></div>
<div style="position:absolute;left:0px;top:158px;width:1395px;height:1px;background:#f4f4f4;"></div>
<div style="position:absolute;left:0px;top:159px;width:1395px;height:1px;background:#a6a6a6;"></div>
<div style="position:absolute;left:0px;top:160px;width:1395px;height:14px;background:linear-gradient(#fbfbfb,#f5f5f5);"></div>
<div style="position:absolute;left:0px;top:174px;width:1395px;height:1px;background:#b4b4b4;"></div>
<div style="position:absolute;left:12px;top:160px;width:1px;height:14px;background:#b9b9b9;"></div>
<svg style="position:absolute;left:1px;top:163px" width="11" height="10" viewBox="0 0 11 10"><path d="M9.6 1 V8.8 H1.8Z" fill="#d9d9d9"/></svg>
<div style="position:absolute;left:100px;top:161px;width:1px;height:13px;background:#dadada;"></div>
<div class="t" style="left:36.5px;width:40px;text-align:center;top:163.29px;font-size:7.3px;line-height:8.76px;font-weight:400;color:#4a4a4a;letter-spacing:0px;-webkit-text-stroke:0.15px #4a4a4a;">B</div>
<div style="position:absolute;left:198px;top:161px;width:1px;height:13px;background:#dadada;"></div>
<div class="t" style="left:129.5px;width:40px;text-align:center;top:163.29px;font-size:7.3px;line-height:8.76px;font-weight:400;color:#4a4a4a;letter-spacing:0px;-webkit-text-stroke:0.15px #4a4a4a;">C</div>
<div style="position:absolute;left:296px;top:161px;width:1px;height:13px;background:#dadada;"></div>
<div class="t" style="left:227.5px;width:40px;text-align:center;top:163.29px;font-size:7.3px;line-height:8.76px;font-weight:400;color:#4a4a4a;letter-spacing:0px;-webkit-text-stroke:0.15px #4a4a4a;">D</div>
<div style="position:absolute;left:384px;top:161px;width:1px;height:13px;background:#dadada;"></div>
<div class="t" style="left:320.5px;width:40px;text-align:center;top:163.29px;font-size:7.3px;line-height:8.76px;font-weight:400;color:#4a4a4a;letter-spacing:0px;-webkit-text-stroke:0.15px #4a4a4a;">E</div>
<div style="position:absolute;left:385px;top:160px;width:195px;height:13px;background:#efefef;"></div>
<div style="position:absolute;left:384px;top:173px;width:197px;height:2px;background:#165a2e;"></div>
<div style="position:absolute;left:580px;top:161px;width:1px;height:13px;background:#dadada;"></div>
<div class="t" style="left:462.5px;width:40px;text-align:center;top:163.29px;font-size:7.3px;line-height:8.76px;font-weight:400;color:#4a4a4a;letter-spacing:0px;-webkit-text-stroke:0.15px #4a4a4a;">F</div>
<div style="position:absolute;left:671px;top:161px;width:1px;height:13px;background:#dadada;"></div>
<div class="t" style="left:606.0px;width:40px;text-align:center;top:163.29px;font-size:7.3px;line-height:8.76px;font-weight:400;color:#4a4a4a;letter-spacing:0px;-webkit-text-stroke:0.15px #4a4a4a;">G</div>
<div style="position:absolute;left:867px;top:161px;width:1px;height:13px;background:#dadada;"></div>
<div class="t" style="left:749.5px;width:40px;text-align:center;top:163.29px;font-size:7.3px;line-height:8.76px;font-weight:400;color:#4a4a4a;letter-spacing:0px;-webkit-text-stroke:0.15px #4a4a4a;">H</div>
<div style="position:absolute;left:1063px;top:161px;width:1px;height:13px;background:#dadada;"></div>
<div class="t" style="left:945.5px;width:40px;text-align:center;top:163.29px;font-size:7.3px;line-height:8.76px;font-weight:400;color:#4a4a4a;letter-spacing:0px;-webkit-text-stroke:0.15px #4a4a4a;">I</div>
<div style="position:absolute;left:1259px;top:161px;width:1px;height:13px;background:#dadada;"></div>
<div class="t" style="left:1141.5px;width:40px;text-align:center;top:163.29px;font-size:7.3px;line-height:8.76px;font-weight:400;color:#4a4a4a;letter-spacing:0px;-webkit-text-stroke:0.15px #4a4a4a;">J</div>
<div style="position:absolute;left:1347px;top:161px;width:1px;height:13px;background:#dadada;"></div>
<div class="t" style="left:1283.5px;width:40px;text-align:center;top:163.29px;font-size:7.3px;line-height:8.76px;font-weight:400;color:#4a4a4a;letter-spacing:0px;-webkit-text-stroke:0.15px #4a4a4a;">K</div>
<div style="position:absolute;left:1393px;top:161px;width:1px;height:13px;background:#dadada;"></div>
<div class="t" style="left:1350.5px;width:40px;text-align:center;top:163.29px;font-size:7.3px;line-height:8.76px;font-weight:400;color:#4a4a4a;letter-spacing:0px;-webkit-text-stroke:0.15px #4a4a4a;">L</div>
<div style="position:absolute;left:0px;top:175px;width:12px;height:404px;background:#f8f8f8;"></div>
<div style="position:absolute;left:12px;top:175px;width:1px;height:404px;background:#b4b4b4;"></div>
<div style="position:absolute;left:0px;top:202px;width:12px;height:1px;background:#dedede;"></div>
<div class="t" style="left:-4.8px;width:20px;text-align:center;top:193.79px;font-size:7.3px;line-height:8.76px;font-weight:400;color:#3e3e3e;letter-spacing:0px;-webkit-text-stroke:0.15px #3e3e3e;">1</div>
<div style="position:absolute;left:0px;top:216px;width:12px;height:1px;background:#dedede;"></div>
<div class="t" style="left:-4.8px;width:20px;text-align:center;top:208.29px;font-size:7.3px;line-height:8.76px;font-weight:400;color:#3e3e3e;letter-spacing:0px;-webkit-text-stroke:0.15px #3e3e3e;">2</div>
<div style="position:absolute;left:0px;top:230px;width:12px;height:1px;background:#dedede;"></div>
<div class="t" style="left:-4.8px;width:20px;text-align:center;top:221.79px;font-size:7.3px;line-height:8.76px;font-weight:400;color:#3e3e3e;letter-spacing:0px;-webkit-text-stroke:0.15px #3e3e3e;">3</div>
<div style="position:absolute;left:0px;top:243px;width:12px;height:1px;background:#dedede;"></div>
<div class="t" style="left:-4.8px;width:20px;text-align:center;top:235.19px;font-size:7.3px;line-height:8.76px;font-weight:400;color:#3e3e3e;letter-spacing:0px;-webkit-text-stroke:0.15px #3e3e3e;">4</div>
<div style="position:absolute;left:0px;top:256px;width:12px;height:1px;background:#dedede;"></div>
<div class="t" style="left:-4.8px;width:20px;text-align:center;top:247.79px;font-size:7.3px;line-height:8.76px;font-weight:400;color:#3e3e3e;letter-spacing:0px;-webkit-text-stroke:0.15px #3e3e3e;">5</div>
<div style="position:absolute;left:0px;top:283px;width:12px;height:1px;background:#dedede;"></div>
<div class="t" style="left:-4.8px;width:20px;text-align:center;top:274.69px;font-size:7.3px;line-height:8.76px;font-weight:400;color:#3e3e3e;letter-spacing:0px;-webkit-text-stroke:0.15px #3e3e3e;">6</div>
<div style="position:absolute;left:0px;top:296px;width:12px;height:1px;background:#dedede;"></div>
<div class="t" style="left:-4.8px;width:20px;text-align:center;top:287.79px;font-size:7.3px;line-height:8.76px;font-weight:400;color:#3e3e3e;letter-spacing:0px;-webkit-text-stroke:0.15px #3e3e3e;">7</div>
<div style="position:absolute;left:0px;top:350px;width:12px;height:1px;background:#dedede;"></div>
<div class="t" style="left:-4.8px;width:20px;text-align:center;top:341.39px;font-size:7.3px;line-height:8.76px;font-weight:400;color:#3e3e3e;letter-spacing:0px;-webkit-text-stroke:0.15px #3e3e3e;">8</div>
<div style="position:absolute;left:0px;top:363px;width:12px;height:1px;background:#dedede;"></div>
<div class="t" style="left:-4.8px;width:20px;text-align:center;top:354.79px;font-size:7.3px;line-height:8.76px;font-weight:400;color:#3e3e3e;letter-spacing:0px;-webkit-text-stroke:0.15px #3e3e3e;">9</div>
<div style="position:absolute;left:0px;top:496px;width:12px;height:1px;background:#dedede;"></div>
<div class="t" style="left:-4.8px;width:20px;text-align:center;top:487.59px;font-size:7.3px;line-height:8.76px;font-weight:400;color:#3e3e3e;letter-spacing:0px;-webkit-text-stroke:0.15px #3e3e3e;">10</div>
<div style="position:absolute;left:0px;top:508px;width:12px;height:1px;background:#dedede;"></div>
<div class="t" style="left:-4.8px;width:20px;text-align:center;top:500.09px;font-size:7.3px;line-height:8.76px;font-weight:400;color:#3e3e3e;letter-spacing:0px;-webkit-text-stroke:0.15px #3e3e3e;">11</div>
<div style="position:absolute;left:0px;top:521px;width:12px;height:1px;background:#dedede;"></div>
<div class="t" style="left:-4.8px;width:20px;text-align:center;top:512.79px;font-size:7.3px;line-height:8.76px;font-weight:400;color:#3e3e3e;letter-spacing:0px;-webkit-text-stroke:0.15px #3e3e3e;">12</div>
<div style="position:absolute;left:0px;top:532px;width:12px;height:1px;background:#dedede;"></div>
<div class="t" style="left:-4.8px;width:20px;text-align:center;top:524.19px;font-size:7.3px;line-height:8.76px;font-weight:400;color:#3e3e3e;letter-spacing:0px;-webkit-text-stroke:0.15px #3e3e3e;">13</div>
<div style="position:absolute;left:0px;top:544px;width:12px;height:1px;background:#dedede;"></div>
<div class="t" style="left:-4.8px;width:20px;text-align:center;top:535.29px;font-size:7.3px;line-height:8.76px;font-weight:400;color:#3e3e3e;letter-spacing:0px;-webkit-text-stroke:0.15px #3e3e3e;">14</div>
<div style="position:absolute;left:0px;top:555px;width:12px;height:1px;background:#dedede;"></div>
<div class="t" style="left:-4.8px;width:20px;text-align:center;top:546.39px;font-size:7.3px;line-height:8.76px;font-weight:400;color:#3e3e3e;letter-spacing:0px;-webkit-text-stroke:0.15px #3e3e3e;">15</div>
<div style="position:absolute;left:0px;top:566px;width:12px;height:1px;background:#dedede;"></div>
<div class="t" style="left:-4.8px;width:20px;text-align:center;top:557.49px;font-size:7.3px;line-height:8.76px;font-weight:400;color:#3e3e3e;letter-spacing:0px;-webkit-text-stroke:0.15px #3e3e3e;">16</div>
<div style="position:absolute;left:0px;top:577px;width:12px;height:1px;background:#dedede;"></div>
<div class="t" style="left:-4.8px;width:20px;text-align:center;top:568.79px;font-size:7.3px;line-height:8.76px;font-weight:400;color:#3e3e3e;letter-spacing:0px;-webkit-text-stroke:0.15px #3e3e3e;">17</div>
<div style="position:absolute;left:0px;top:588px;width:12px;height:1px;background:#dedede;"></div>
<div class="t" style="left:-4.8px;width:20px;text-align:center;top:579.79px;font-size:7.3px;line-height:8.76px;font-weight:400;color:#3e3e3e;letter-spacing:0px;-webkit-text-stroke:0.15px #3e3e3e;">18</div>
<div style="position:absolute;left:13px;top:231px;width:1334px;height:25px;background:#edb5b4;"></div>
<div style="position:absolute;left:13px;top:257px;width:1334px;height:264px;background:#c8f0dc;"></div>
<div style="position:absolute;left:13px;top:202px;width:1335px;height:1px;background:#000;"></div>
<div style="position:absolute;left:13px;top:230px;width:1335px;height:1px;background:#000;"></div>
<div style="position:absolute;left:13px;top:256px;width:1335px;height:1px;background:#000;"></div>
<div style="position:absolute;left:13px;top:521px;width:1335px;height:1px;background:#000;"></div>
<div style="position:absolute;left:1347px;top:174px;width:1px;height:348px;background:#000;"></div>
<div style="position:absolute;left:100px;top:202px;width:1px;height:320px;background:#000;"></div>
<div style="position:absolute;left:198px;top:202px;width:1px;height:320px;background:#000;"></div>
<div style="position:absolute;left:296px;top:202px;width:1px;height:320px;background:#000;"></div>
<div style="position:absolute;left:384px;top:202px;width:1px;height:320px;background:#000;"></div>
<div style="position:absolute;left:580px;top:202px;width:1px;height:320px;background:#000;"></div>
<div style="position:absolute;left:671px;top:202px;width:1px;height:320px;background:#000;"></div>
<div style="position:absolute;left:867px;top:202px;width:1px;height:320px;background:#000;"></div>
<div style="position:absolute;left:1063px;top:202px;width:1px;height:320px;background:#000;"></div>
<div style="position:absolute;left:1259px;top:202px;width:1px;height:320px;background:#000;"></div>
<div class="t" style="left:577.4px;top:179.80px;font-size:13px;line-height:15.6px;font-weight:700;color:#000;letter-spacing:0px;-webkit-text-stroke:0.2px #000;">All Meetings(Lifetime)</div>
<div class="t" style="left:12.0px;width:88px;text-align:center;top:211.56px;font-size:8.6px;line-height:10.32px;font-weight:700;color:#000;letter-spacing:-0.4px;-webkit-text-stroke:0.2px #000;">Meeting Date</div>
<div class="t" style="left:100.0px;width:98px;text-align:center;top:211.56px;font-size:8.6px;line-height:10.32px;font-weight:700;color:#000;letter-spacing:-0.4px;-webkit-text-stroke:0.2px #000;">Meeting Time</div>
<div class="t" style="left:198.0px;width:98px;text-align:center;top:211.56px;font-size:8.6px;line-height:10.32px;font-weight:700;color:#000;letter-spacing:-0.4px;-webkit-text-stroke:0.2px #000;">Meeting Location</div>
<div class="t" style="left:296.0px;width:88px;text-align:center;top:211.56px;font-size:8.6px;line-height:10.32px;font-weight:700;color:#000;letter-spacing:-0.4px;-webkit-text-stroke:0.2px #000;">Time Zone</div>
<div class="t" style="left:384.0px;width:196px;text-align:center;top:211.56px;font-size:8.6px;line-height:10.32px;font-weight:700;color:#000;letter-spacing:-0.4px;-webkit-text-stroke:0.2px #000;">Publisher/Participant</div>
<div class="t" style="left:580.0px;width:91px;text-align:center;top:211.56px;font-size:8.6px;line-height:10.32px;font-weight:700;color:#000;letter-spacing:-0.4px;-webkit-text-stroke:0.2px #000;">Table/Seat Number</div>
<div class="t" style="left:671.0px;width:196px;text-align:center;top:211.56px;font-size:8.6px;line-height:10.32px;font-weight:700;color:#000;letter-spacing:-0.4px;-webkit-text-stroke:0.2px #000;">Title Meeting</div>
<div class="t" style="left:1259.0px;width:88px;text-align:center;top:211.56px;font-size:8.6px;line-height:10.32px;font-weight:700;color:#000;letter-spacing:-0.4px;-webkit-text-stroke:0.2px #000;">Status</div>
<div class="t" style="left:867.0px;width:196px;text-align:center;top:204.46px;font-size:8.6px;line-height:10.32px;font-weight:700;color:#000;letter-spacing:-0.4px;-webkit-text-stroke:0.2px #000;">Message from the</div>
<div class="t" style="left:867.0px;width:196px;text-align:center;top:218.36px;font-size:8.6px;line-height:10.32px;font-weight:700;color:#000;letter-spacing:-0.4px;-webkit-text-stroke:0.2px #000;">appointment recipient</div>
<div class="t" style="left:1063.0px;width:196px;text-align:center;top:204.46px;font-size:8.6px;line-height:10.32px;font-weight:700;color:#000;letter-spacing:-0.4px;-webkit-text-stroke:0.2px #000;">Message from the</div>
<div class="t" style="left:1063.0px;width:196px;text-align:center;top:218.36px;font-size:8.6px;line-height:10.32px;font-weight:700;color:#000;letter-spacing:-0.4px;-webkit-text-stroke:0.2px #000;">appointment sender</div>
<div class="t" style="left:12.0px;width:88px;text-align:center;top:238.23px;font-size:10px;line-height:12.0px;font-weight:400;color:#0a0a0a;letter-spacing:0.2px;-webkit-text-stroke:0.2px #0a0a0a;">Jan 12, 2026</div>
<div class="t" style="left:100.0px;width:98px;text-align:center;top:238.23px;font-size:10px;line-height:12.0px;font-weight:400;color:#0a0a0a;letter-spacing:0.2px;-webkit-text-stroke:0.2px #0a0a0a;">1:00 PM - 1:30 PM</div>
<div class="t" style="left:198.0px;width:98px;text-align:center;top:238.23px;font-size:10px;line-height:12.0px;font-weight:400;color:#0a0a0a;letter-spacing:0.2px;-webkit-text-stroke:0.2px #0a0a0a;">-</div>
<div class="t" style="left:296.0px;width:88px;text-align:center;top:232.43px;font-size:10px;line-height:12.0px;font-weight:400;color:#0a0a0a;letter-spacing:0.2px;-webkit-text-stroke:0.2px #0a0a0a;">GMT+07:00</div>
<div class="t" style="left:296.0px;width:88px;text-align:center;top:245.03px;font-size:10px;line-height:12.0px;font-weight:400;color:#0a0a0a;letter-spacing:0.2px;-webkit-text-stroke:0.2px #0a0a0a;">Asia/Bangkok</div>
<div class="t" style="left:384.0px;width:196px;text-align:center;top:232.43px;font-size:10px;line-height:12.0px;font-weight:400;color:#0a0a0a;letter-spacing:0.2px;-webkit-text-stroke:0.2px #0a0a0a;">Praphansarn Publishing Co.,Ltd</div>
<div class="t" style="left:384.0px;width:196px;text-align:center;top:245.03px;font-size:10px;line-height:12.0px;font-weight:400;color:#0a0a0a;letter-spacing:0.2px;-webkit-text-stroke:0.2px #0a0a0a;">admin_pps@praphansarn.com</div>
<div class="t" style="left:580.0px;width:91px;text-align:center;top:238.23px;font-size:10px;line-height:12.0px;font-weight:400;color:#0a0a0a;letter-spacing:0.2px;-webkit-text-stroke:0.2px #0a0a0a;">-</div>
<div class="t" style="left:671.0px;width:196px;text-align:center;top:232.43px;font-size:10px;line-height:12.0px;font-weight:400;color:#0a0a0a;letter-spacing:0.2px;-webkit-text-stroke:0.2px #0a0a0a;">Rights Inquiry: [Book Title] &#8211; Meeting</div>
<div class="t" style="left:671.0px;width:196px;text-align:center;top:245.03px;font-size:10px;line-height:12.0px;font-weight:400;color:#0a0a0a;letter-spacing:0.2px;-webkit-text-stroke:0.2px #0a0a0a;">Request &#8211; [Your Company Name]</div>
<div class="t" style="left:1259.0px;width:88px;text-align:center;top:238.23px;font-size:10px;line-height:12.0px;font-weight:400;color:#0a0a0a;letter-spacing:0.2px;-webkit-text-stroke:0.2px #0a0a0a;">Canceled</div>
<div class="t" style="left:12.0px;width:88px;text-align:center;top:383.44px;font-size:10px;line-height:12.0px;font-weight:400;color:#0a0a0a;letter-spacing:0.2px;-webkit-text-stroke:0.2px #0a0a0a;">Jan 12, 2026</div>
<div class="t" style="left:100.0px;width:98px;text-align:center;top:377.44px;font-size:10px;line-height:12.0px;font-weight:400;color:#0a0a0a;letter-spacing:0.2px;-webkit-text-stroke:0.2px #0a0a0a;">11:00 AM - 11:30</div>
<div class="t" style="left:100.0px;width:98px;text-align:center;top:390.24px;font-size:10px;line-height:12.0px;font-weight:400;color:#0a0a0a;letter-spacing:0.2px;-webkit-text-stroke:0.2px #0a0a0a;">AM</div>
<div class="t" style="left:198.0px;width:98px;text-align:center;top:383.44px;font-size:10px;line-height:12.0px;font-weight:400;color:#0a0a0a;letter-spacing:0.2px;-webkit-text-stroke:0.2px #0a0a0a;">-</div>
<div class="t" style="left:296.0px;width:88px;text-align:center;top:377.44px;font-size:10px;line-height:12.0px;font-weight:400;color:#0a0a0a;letter-spacing:0.2px;-webkit-text-stroke:0.2px #0a0a0a;">GMT+07:00</div>
<div class="t" style="left:296.0px;width:88px;text-align:center;top:390.24px;font-size:10px;line-height:12.0px;font-weight:400;color:#0a0a0a;letter-spacing:0.2px;-webkit-text-stroke:0.2px #0a0a0a;">Asia/Bangkok</div>
<div class="t" style="left:384.0px;width:196px;text-align:center;top:265.44px;font-size:10px;line-height:12.0px;font-weight:400;color:#0a0a0a;letter-spacing:0.2px;-webkit-text-stroke:0.2px #0a0a0a;">Praphansarn Publishing Co.,Ltd</div>
<div class="t" style="left:384.0px;width:196px;text-align:center;top:285.24px;font-size:10px;line-height:12.0px;font-weight:400;color:#0a0a0a;letter-spacing:0.2px;-webkit-text-stroke:0.2px #0a0a0a;">admin_pps@praphansarn.com</div>
<div class="t" style="left:580.0px;width:91px;text-align:center;top:383.44px;font-size:10px;line-height:12.0px;font-weight:400;color:#0a0a0a;letter-spacing:0.2px;-webkit-text-stroke:0.2px #0a0a0a;">-</div>
<div class="t" style="left:671.0px;width:196px;text-align:center;top:377.44px;font-size:10px;line-height:12.0px;font-weight:400;color:#0a0a0a;letter-spacing:0.2px;-webkit-text-stroke:0.2px #0a0a0a;">Rights Inquiry: [Book Title] &#8211; Meeting</div>
<div class="t" style="left:671.0px;width:196px;text-align:center;top:390.24px;font-size:10px;line-height:12.0px;font-weight:400;color:#0a0a0a;letter-spacing:0.2px;-webkit-text-stroke:0.2px #0a0a0a;">Request &#8211; [Your Company Name]</div>
<div class="t" style="left:1259.0px;width:88px;text-align:center;top:383.44px;font-size:10px;line-height:12.0px;font-weight:400;color:#0a0a0a;letter-spacing:0.2px;-webkit-text-stroke:0.2px #0a0a0a;">Confirmed</div>
<div class="t" style="left:867.0px;width:196px;text-align:center;top:258.04px;font-size:10px;line-height:12.0px;font-weight:400;color:#0a0a0a;letter-spacing:0.15px;-webkit-text-stroke:0.2px #0a0a0a;"><b>Dear [Contact Person Name or Rights</b></div>
<div class="t" style="left:867.0px;width:196px;text-align:center;top:270.74px;font-size:10px;line-height:12.0px;font-weight:400;color:#0a0a0a;letter-spacing:0.15px;-webkit-text-stroke:0.2px #0a0a0a;"><b>Manager],</b></div>
<div class="t" style="left:867.0px;width:196px;text-align:center;top:297.84px;font-size:10px;line-height:12.0px;font-weight:400;color:#0a0a0a;letter-spacing:0.15px;-webkit-text-stroke:0.2px #0a0a0a;">My name is [Your Name] and I am writing</div>
<div class="t" style="left:867.0px;width:196px;text-align:center;top:310.74px;font-size:10px;line-height:12.0px;font-weight:400;color:#0a0a0a;letter-spacing:0.15px;-webkit-text-stroke:0.2px #0a0a0a;">to you on behalf of <b>[Your</b></div>
<div class="t" style="left:867.0px;width:196px;text-align:center;top:323.54px;font-size:10px;line-height:12.0px;font-weight:400;color:#0a0a0a;letter-spacing:0.15px;-webkit-text-stroke:0.2px #0a0a0a;"><b>Company/Publisher Name]</b> based in</div>
<div class="t" style="left:867.0px;width:196px;text-align:center;top:336.94px;font-size:10px;line-height:12.0px;font-weight:400;color:#0a0a0a;letter-spacing:0.15px;-webkit-text-stroke:0.2px #0a0a0a;">[Your Country].</div>
<div class="t" style="left:867.0px;width:196px;text-align:center;top:364.54px;font-size:10px;line-height:12.0px;font-weight:400;color:#0a0a0a;letter-spacing:0.15px;-webkit-text-stroke:0.2px #0a0a0a;">We have been following the success of</div>
<div class="t" style="left:867.0px;width:196px;text-align:center;top:377.54px;font-size:10px;line-height:12.0px;font-weight:400;color:#0a0a0a;letter-spacing:0.15px;-webkit-text-stroke:0.2px #0a0a0a;"><b>"[Book Title]"</b> by [Author's Name] and</div>
<div class="t" style="left:867.0px;width:196px;text-align:center;top:390.54px;font-size:10px;line-height:12.0px;font-weight:400;color:#0a0a0a;letter-spacing:0.15px;-webkit-text-stroke:0.2px #0a0a0a;">are highly impressed by its [mention a</div>
<div class="t" style="left:867.0px;width:196px;text-align:center;top:403.74px;font-size:10px;line-height:12.0px;font-weight:400;color:#0a0a0a;letter-spacing:0.15px;-webkit-text-stroke:0.2px #0a0a0a;">specific strength, e.g., unique storytelling</div>
<div class="t" style="left:867.0px;width:196px;text-align:center;top:416.84px;font-size:10px;line-height:12.0px;font-weight:400;color:#0a0a0a;letter-spacing:0.15px;-webkit-text-stroke:0.2px #0a0a0a;">/ pedagogical value / market</div>
<div class="t" style="left:867.0px;width:196px;text-align:center;top:429.74px;font-size:10px;line-height:12.0px;font-weight:400;color:#0a0a0a;letter-spacing:0.15px;-webkit-text-stroke:0.2px #0a0a0a;">performance]. We believe this title would</div>
<div class="t" style="left:867.0px;width:196px;text-align:center;top:442.84px;font-size:10px;line-height:12.0px;font-weight:400;color:#0a0a0a;letter-spacing:0.15px;-webkit-text-stroke:0.2px #0a0a0a;">be an excellent fit for our market and are</div>
<div class="t" style="left:867.0px;width:196px;text-align:center;top:455.54px;font-size:10px;line-height:12.0px;font-weight:400;color:#0a0a0a;letter-spacing:0.15px;-webkit-text-stroke:0.2px #0a0a0a;">interested in exploring the possibility of</div>
<div class="t" style="left:867.0px;width:196px;text-align:center;top:468.44px;font-size:10px;line-height:12.0px;font-weight:400;color:#0a0a0a;letter-spacing:0.15px;-webkit-text-stroke:0.2px #0a0a0a;">acquiring the <b>[e.g., Simplified Chinese /</b></div>
<div class="t" style="left:867.0px;width:196px;text-align:center;top:481.54px;font-size:10px;line-height:12.0px;font-weight:400;color:#0a0a0a;letter-spacing:0.15px;-webkit-text-stroke:0.2px #0a0a0a;"><b>Thai / Digital]</b> rights.</div>
</body></html>
